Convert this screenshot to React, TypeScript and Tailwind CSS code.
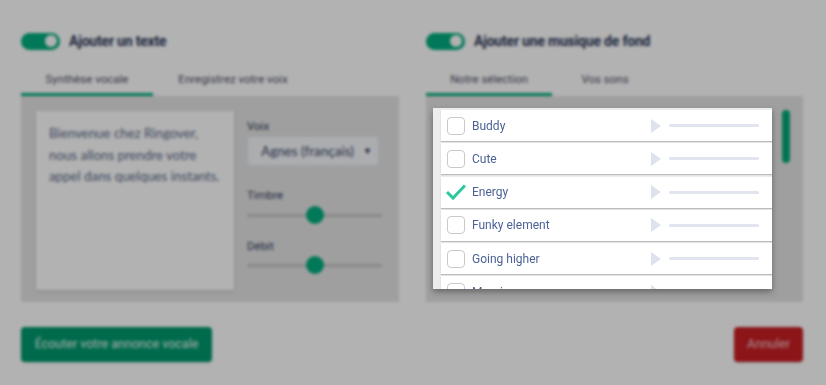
const sounds = [
  { name: "Buddy", checked: false },
  { name: "Cute", checked: false },
  { name: "Energy", checked: true },
  { name: "Funky element", checked: false },
  { name: "Going higher", checked: false },
  { name: "Morning", checked: false },
];

function Toggle() {
  return (
    <div className="flex items-center justify-end w-[39px] h-[17px] rounded-full bg-[#02ad7e] px-[3px]">
      <div className="w-[12px] h-[12px] rounded-full bg-white" />
    </div>
  );
}

function Tabs({ first, second, w1, w2 }: { first: string; second: string; w1: string; w2: string }) {
  return (
    <div className="flex h-[30px] text-[11.5px] text-[#4d5068]">
      <div className={`${w1} flex items-center justify-center border-b-[3px] border-[#02ad7e]`}>{first}</div>
      <div className={`${w2} flex items-center justify-center border-b-[3px] border-transparent`}>{second}</div>
    </div>
  );
}

function Slider() {
  return (
    <div className="relative h-[18px] flex items-center">
      <div className="w-full h-[3px] rounded bg-[#c4c4c4]" />
      <div className="absolute left-[59px] w-[18px] h-[18px] rounded-full bg-[#02ad7e]" />
    </div>
  );
}

export default function App() {
  return (
    <div className="relative w-[826px] h-[385px] overflow-hidden bg-white font-['Roboto',sans-serif]">
      <div className="grid grid-cols-[378px_377px] gap-[27px] pl-[21px] pt-[32px]">
        {/* left */}
        <section className="flex flex-col">
          <div className="flex items-center gap-[9px] h-[18px]">
            <Toggle />
            <h2 className="text-[14px] font-bold text-[#2a3658] tracking-[-0.2px]">Ajouter un texte</h2>
          </div>
          <div className="mt-[16px]">
            <Tabs first="Synthèse vocale" second="Enregistrez votre voix" w1="w-[132px]" w2="w-[160px]" />
          </div>
          <div className="flex gap-[13px] h-[206px] bg-[#e4e4e4] pt-[15px] pl-[15px] pb-[12px]">
            <div className="w-[198px] bg-white shadow-[0_1px_3px_rgba(0,0,0,0.15)] px-[13px] pt-[12px] font-['Lato',sans-serif] text-[13.3px] leading-[21.5px] text-[#5b6a8a]">
              Bienvenue chez Ringover, nous allons prendre votre appel dans quelques instants.
            </div>
            <div className="w-[135px] flex flex-col pt-[9px]">
              <label className="text-[11.5px] text-[#2d3a5c] leading-[12px]">Voix</label>
              <div className="mt-[4px] flex items-center justify-between h-[30px] w-[132px] rounded border border-[#dfe4ec] bg-[#f6f8fb] pl-[13px] pr-[6px] font-['Lato',sans-serif] text-[13.5px] text-[#3c4868] whitespace-nowrap">
                <span>Agnes (français)</span>
                <span className="text-[9px] text-[#2d3a5c]">▼</span>
              </div>
              <label className="mt-[23px] text-[11.5px] text-[#2d3a5c] leading-[12px]">Timbre</label>
              <div className="mt-[5px]"><Slider /></div>
              <label className="mt-[16px] text-[11.5px] text-[#2d3a5c] leading-[12px]">Débit</label>
              <div className="mt-[4px]"><Slider /></div>
            </div>
          </div>
          <div className="mt-[25px]">
            <button className="h-[35px] w-[191px] rounded bg-[#00996d] text-[12.5px] text-[#e8f6f1] shadow-[0_1px_2px_rgba(0,0,0,0.15)]">
              Écouter votre annonce vocale
            </button>
          </div>
        </section>

        {/* right */}
        <section className="flex flex-col">
          <div className="flex items-center gap-[9px] h-[18px]">
            <Toggle />
            <h2 className="text-[14px] font-bold text-[#2a3658] tracking-[-0.2px]">Ajouter une musique de fond</h2>
          </div>
          <div className="mt-[16px]">
            <Tabs first="Notre sélection" second="Vos sons" w1="w-[126px]" w2="w-[106px]" />
          </div>
          <div className="flex h-[206px] bg-[#e4e4e4] pt-[12px] pl-[7px]">
            <div className="relative z-20 w-[339px] h-[181px] overflow-hidden bg-[#ececec] pl-[8px] pt-[2px] shadow-[0_3px_6px_rgba(0,0,0,0.35)]">
              {sounds.map((s) => (
                <div
                  key={s.name}
                  className="flex items-center h-[31px] mb-[2.3px] bg-white pl-[6px] pr-[13px] shadow-[0_1px_1px_rgba(0,0,0,0.2)]"
                >
                  <div className="w-[18px] h-[18px] flex items-center justify-center">
                    {s.checked ? (
                      <svg width="20" height="18" viewBox="0 0 20 18" className="shrink-0">
                        <polyline points="1,9 7,15 19,2.5" fill="none" stroke="#2bc9a0" strokeWidth="3" />
                      </svg>
                    ) : (
                      <div className="w-[18px] h-[18px] rounded-[4px] border border-[#c9c9c9]" />
                    )}
                  </div>
                  <span className="ml-[7px] flex-1 text-[12px] text-[#4c6196]">{s.name}</span>
                  <svg width="10" height="14" viewBox="0 0 10 14">
                    <polygon points="0,0 10,7 0,14" fill="#dde3ec" />
                  </svg>
                  <div className="ml-[8px] w-[90px] h-[3px] rounded-full bg-[#e0e5ee]" />
                </div>
              ))}
            </div>
            <div className="ml-[10px] mt-[2px] w-[8px] h-[53px] rounded-full bg-[#02a878]" />
          </div>
          <div className="mt-[25px] flex justify-end">
            <button className="h-[35px] w-[69px] rounded bg-[#c81f25] text-[12.5px] text-[#f3c9ca] shadow-[0_1px_2px_rgba(0,0,0,0.15)]">
              Annuler
            </button>
          </div>
        </section>
      </div>

      {/* dim overlay, the sound list sits above it */}
      <div className="absolute inset-0 z-10 bg-black/30 backdrop-blur-[1.5px]" />
    </div>
  );
}
